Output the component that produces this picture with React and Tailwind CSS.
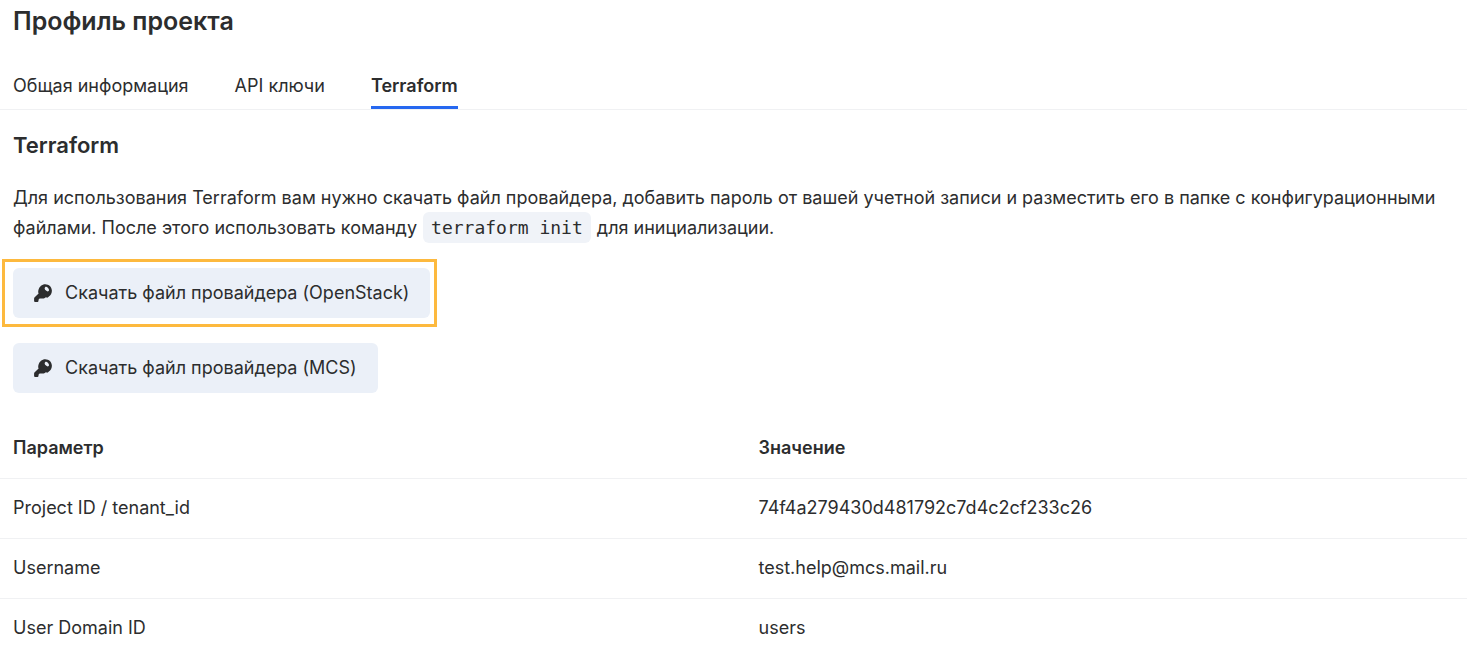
const tabs = [
  { label: "Общая информация" },
  { label: "API ключи" },
  { label: "Terraform", active: true },
];

const rows = [
  ["Project ID / tenant_id", "74f4a279430d481792c7d4c2cf233c26"],
  ["Username", "test.help@mcs.mail.ru"],
  ["User Domain ID", "users"],
];

function KeyIcon() {
  return (
    <svg viewBox="0 0 18 18" className="size-[18px] text-[#2c2d2e]" aria-hidden="true">
      <path
        fill="currentColor"
        fillRule="evenodd"
        d="M11.2 0.2C14.9 0.2 17.9 3 17.9 6.7C17.9 9.3 16.6 11.4 14.9 12.6C14.1 13.4 13.3 14 12.6 13.4C12 12.9 11.3 13.4 10.8 13.9C10.2 14.4 9.2 14.4 8.4 14.4L6.4 14.4C5.4 14.4 4.5 15 4.5 16L4.5 17.1C4.5 17.6 4.2 17.9 3.7 17.9L0.8 17.9C0.3 17.9 0.1 17.6 0.1 17.1L0.1 14.6C0.1 14 0.3 13.7 0.7 13.3L4.6 9.5C4.1 8.6 4.1 7.2 4.5 5.8C5.4 2.5 8 0.2 11.2 0.2ZM11.1 3.2C10.2 4.2 10.8 5.4 11.7 6.3C12.6 7.2 13.8 7.9 14.6 7.1C15.4 6.2 14.9 5 14 4C13.1 3 12 2.3 11.1 3.2Z"
      />
    </svg>
  );
}

function DownloadButton({ children }) {
  return (
    <button type="button" className="flex h-[50px] items-center gap-[13px] rounded-md bg-[#ebf0f8] px-[21px]">
      <KeyIcon />
      {children}
    </button>
  );
}

export default function App() {
  return (
    <main className="bg-white font-[Inter,sans-serif] text-[18px] leading-[30px] text-[#2c2d2e]">
      <h1 className="px-[13px] pt-[3px] text-[25px] leading-9 font-semibold">Профиль проекта</h1>
      <nav className="mt-8 flex gap-[46px] border-b border-[#f0f1f3] px-[13px]">
        {tabs.map((t) => (
          <a
            key={t.label}
            href="#"
            className={t.active ? "h-[38px] border-b-3 border-[#2668f0] font-semibold" : "h-[38px]"}
          >
            {t.label}
          </a>
        ))}
      </nav>
      <section className="px-[13px] pt-5">
        <h2 className="text-[22px] leading-[30px] font-semibold">Terraform</h2>
        <p className="mt-[23px]">
          Для использования Terraform вам нужно скачать файл провайдера, добавить пароль от вашей учетной записи и разместить его в папке с конфигурационными файлами. После этого использовать команду{" "}
          <code className="mx-px rounded-md bg-[#f0f3f8] px-2 py-[5px] font-['DejaVu_Sans_Mono',monospace] text-lg">terraform init</code>{" "}
          для инициализации.
        </p>
      </section>
      <div className="flex flex-col items-start gap-4 pt-4 pl-[2px]">
        <div className="border-3 border-[#fdb93e] pt-1.5 pr-1 pb-1.5 pl-2">
          <DownloadButton>Скачать файл провайдера (OpenStack)</DownloadButton>
        </div>
        <div className="px-[11px]">
          <DownloadButton>Скачать файл провайдера (MCS)</DownloadButton>
        </div>
      </div>
      <table className="mt-[25px] w-full table-fixed text-left">
        <thead>
          <tr className="h-[60px] border-b border-[#f0f1f3]">
            <th className="px-[13px] font-semibold">Параметр</th>
            <th className="px-[25px] font-semibold">Значение</th>
          </tr>
        </thead>
        <tbody>
          {rows.map(([k, v]) => (
            <tr key={k} className="h-[60px] border-b border-[#f0f1f3] last:border-0">
              <td className="px-[13px]">{k}</td>
              <td className="px-[25px]">{v}</td>
            </tr>
          ))}
        </tbody>
      </table>
    </main>
  );
}
